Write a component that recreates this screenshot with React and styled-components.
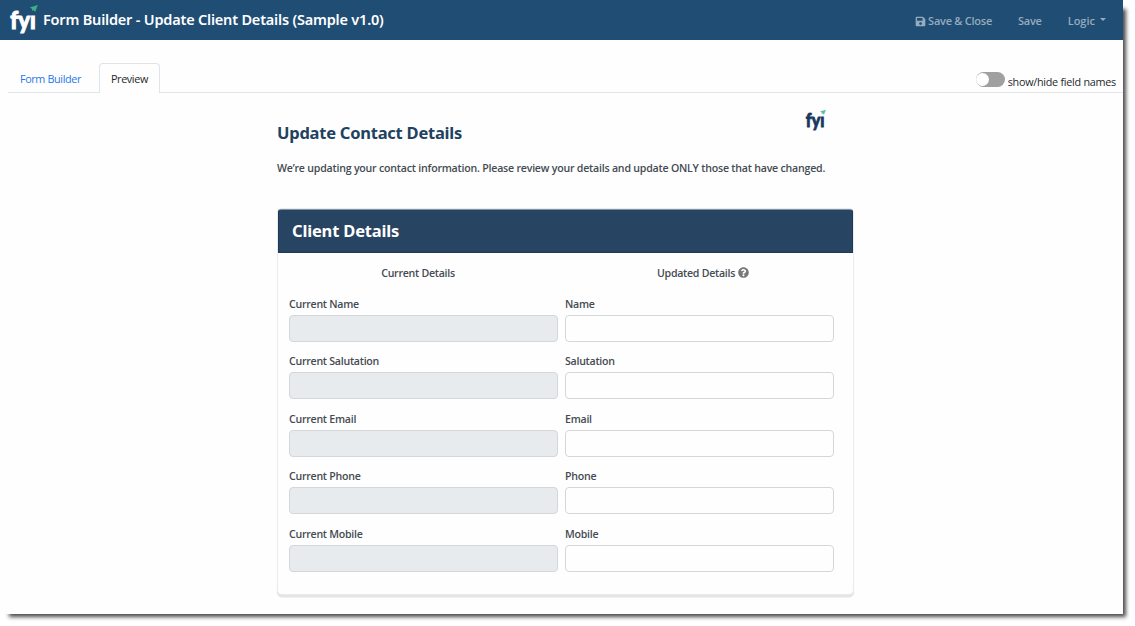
import styled, { createGlobalStyle } from "styled-components";
import { FaQuestionCircle, FaSave } from "react-icons/fa";

const GlobalStyle = createGlobalStyle`
  *{
    box-sizing: border-box;
  }

  body{
    min-height: 100vh;
    margin: 0;
    background-color: white;
    font-family: "Open Sans", "Noto Sans", sans-serif;
    font-size: 10.6px;
    color: #444b52;
  }

  h1, h2, h3, p{
    margin: 0;
  }

  h1, h2, h3{
    font-family: "Noto Sans", "Open Sans", sans-serif;
    font-weight: 600;
  }
`;

const Window = styled.main`
  width: 1123px;
  height: 614px;
  background-color: #fefefe;
  box-shadow: 6px 6px 4px -3px rgba(0, 0, 0, 0.7);
`;

const TopBar = styled.header`
  display: flex;
  align-items: center;
  height: 40px;
  padding: 0 17px 0 9px;
  background-color: #204d74;

  h1{
    flex: 1;
    margin: 0 0 2px 5px;
    font-size: 14.5px;
    line-height: 38px;
    letter-spacing: -0.2px;
    color: white;
  }
`;

const Actions = styled.nav`
  display: flex;
  align-items: center;
  gap: 26px;
`;

const Action = styled.button`
  display: flex;
  align-items: center;
  gap: 2px;
  padding: 2px 0 0;
  border: none;
  background: none;
  font-family: inherit;
  font-size: 11px;
  font-weight: 600;
  line-height: 16px;
  letter-spacing: ${(p) => p.$spacing || "-0.25px"};
  color: #96abbf;
  cursor: pointer;
`;

const Caret = styled.span`
  margin: 0 0 3px 3px;
  border: 3px solid transparent;
  border-top-color: currentColor;
  border-bottom: 0;
`;

const TabBar = styled.div`
  display: flex;
  align-items: flex-end;
  justify-content: space-between;
  height: 53px;
  margin-left: 8px;
  border-bottom: 1px solid #e3e6e9;
`;

const Tabs = styled.div`
  display: flex;
  margin-bottom: -1px;
`;

const Tab = styled.button`
  height: 30px;
  padding: 0 11px;
  border: 1px solid ${(p) => (p.$active ? "#e0e4e8" : "transparent")};
  border-bottom: none;
  border-radius: 4px 4px 0 0;
  background-color: ${(p) => (p.$active ? "#fefefe" : "transparent")};
  font-family: inherit;
  font-size: 10.8px;
  line-height: 27px;
  letter-spacing: -0.37px;
  color: ${(p) => (p.$active ? "#24282c" : "#1f78f0")};
  cursor: pointer;

  &:first-child{
    padding: 0 17px 0 11px;
  }
`;

const Toggle = styled.label`
  display: flex;
  align-items: center;
  gap: 3px;
  padding: 0 7px 1px 0;
  font-size: 10.8px;
  line-height: 16px;
  letter-spacing: -0.26px;
  color: #24282c;
`;

const Switch = styled.span`
  display: flex;
  align-items: center;
  width: 29px;
  height: 15px;
  margin-bottom: 4px;
  border-radius: 8px;
  background-color: #a0a0a0;

  &::before{
    content: "";
    width: 13px;
    height: 13px;
    border-radius: 50%;
    background-color: white;
  }
`;

const Page = styled.section`
  width: 575px;
  margin: 0 0 0 278px;
`;

const Intro = styled.div`
  display: flex;
  justify-content: space-between;
  height: 64px;
  padding: 16px 27px 0 0;

  h2{
    margin: 11px 0 0 -1px;
    font-size: 16.5px;
    font-weight: 700;
    line-height: 26px;
    letter-spacing: -0.24px;
    color: #1f4260;
  }
`;

const Lead = styled.p`
  height: 52px;
  margin-left: -1px;
  padding-top: 3px;
  font-weight: 600;
  line-height: 16px;
  letter-spacing: -0.217px;
  white-space: nowrap;
`;

const Card = styled.div`
  height: 385px;
  border-radius: 4px;
  background-color: #fefefe;
  box-shadow: 0 0 0 1px #e9ebec, 0 2px 0 1px #e2e4e5, 0 3px 1px 1px #eff2f2;
`;

const CardTitle = styled.h3`
  height: 44px;
  padding-left: 13px;
  border: 1px solid #1d3b59;
  border-top-color: #8090a0;
  border-radius: 3px 3px 0 0;
  background-color: #274462;
  font-size: 16.5px;
  font-weight: 700;
  line-height: 41px;
  letter-spacing: -0.17px;
  color: white;
`;

const Fields = styled.div`
  display: grid;
  grid-template-columns: 269px 269px;
  grid-template-rows: 37px;
  grid-auto-rows: 57.4px;
  column-gap: 7px;
  padding: 0 0 0 11px;
`;

const ColumnHead = styled.div`
  display: flex;
  justify-content: center;
  padding: 12px 11px 0 0;
  font-weight: 600;
  line-height: 16px;
  letter-spacing: -0.27px;

  & + &{
    padding-right: 0;
    padding-left: 7px;
  }

  svg{
    margin: 2px 0 0 3px;
    color: #777;
  }
`;

const Field = styled.label`
  display: flex;
  flex-flow: column;
  gap: 3px;
  padding-top: 6px;
  font-weight: 600;
  line-height: 16px;
  letter-spacing: -0.26px;
`;

const Input = styled.input`
  width: 100%;
  height: 27px;
  padding: 0 8px;
  border: 1px solid #d3d7da;
  border-radius: 4px;
  background-color: #fefefe;

  &:disabled{
    background-color: #e8ebed;
  }
`;

const LogoSvg = styled.svg`
  flex: none;
  width: ${(p) => p.$width}px;
  height: ${(p) => (p.$width * 32) / 29}px;
  overflow: visible;
`;

const Logo = ({ width, color, accent }) => (
  <LogoSvg $width={width} viewBox="0 0 29 32" role="img" aria-label="fyi">
    <text
      x="1.2"
      y="24.5"
      textLength="25.5"
      lengthAdjust="spacingAndGlyphs"
      fontFamily="Lato, sans-serif"
      fontSize="25"
      fontWeight="900"
      fill={color}
      stroke={color}
      strokeWidth="1.1"
    >
      fyı
    </text>
    <path d="M20.8 3.6 L28.8 1 L26.2 8 L24.4 6 L22.8 7.2 L23.2 5 Z" fill={accent} />
  </LogoSvg>
);

const fields = ["Name", "Salutation", "Email", "Phone", "Mobile"];

function App() {
  return (
    <>
      <GlobalStyle />
      <Window>
        <TopBar>
          <Logo width={29} color="#fff" accent="#3fae88" />
          <h1>Form Builder - Update Client Details (Sample v1.0)</h1>
          <Actions>
            <Action>
              <FaSave size={11} />
              Save & Close
            </Action>
            <Action>Save</Action>
            <Action $spacing="0">
              Logic
              <Caret />
            </Action>
          </Actions>
        </TopBar>
        <TabBar>
          <Tabs>
            <Tab>Form Builder</Tab>
            <Tab $active>Preview</Tab>
          </Tabs>
          <Toggle>
            <Switch />
            show/hide field names
          </Toggle>
        </TabBar>
        <Page>
          <Intro>
            <h2>Update Contact Details</h2>
            <Logo width={21} color="#17375e" accent="#58bfa0" />
          </Intro>
          <Lead>
            We’re updating your contact information. Please review your details and update ONLY those that have changed.
          </Lead>
          <Card>
            <CardTitle>Client Details</CardTitle>
            <Fields>
              <ColumnHead>Current Details</ColumnHead>
              <ColumnHead>
                Updated Details
                <FaQuestionCircle size={11} />
              </ColumnHead>
              {fields.map((name) => [
                <Field key={`current-${name}`}>
                  Current {name}
                  <Input disabled />
                </Field>,
                <Field key={name}>
                  {name}
                  <Input />
                </Field>,
              ])}
            </Fields>
          </Card>
        </Page>
      </Window>
    </>
  );
}

export default App;
